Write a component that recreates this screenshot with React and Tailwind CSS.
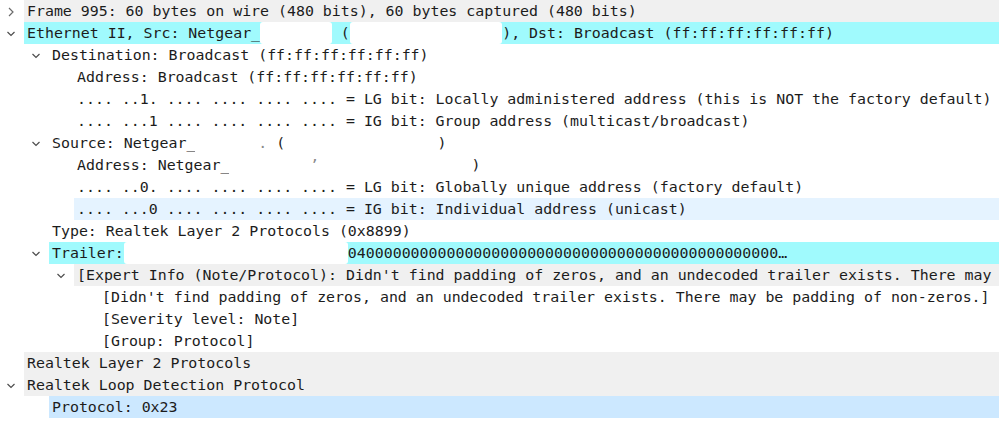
import React from "react";

const indentWidth = {
  0: "w-[24px]",
  1: "w-[49px]",
  2: "w-[74px]",
  3: "w-[99px]",
};

const rowBg = {
  gray: "bg-[#f0f0f0]",
  cyan: "bg-[#a0fafd]",
  hover: "bg-[#e5f3ff]",
  selected: "bg-[#cce8ff]",
  none: "",
};

// h = redacted part (kept so the monospace columns stay in place)
const rows = [
  { level: 0, arrow: "right", bg: "gray", parts: ["Frame 995: 60 bytes on wire (480 bits), 60 bytes captured (480 bits)"] },
  {
    level: 0,
    arrow: "down",
    bg: "cyan",
    parts: ["Ethernet II, Src: Netgear_", { h: "xx:xx:xx" }, " (", { h: "xx:xx:xx:xx:xx:xx" }, "), Dst: Broadcast (ff:ff:ff:ff:ff:ff)"],
  },
  { level: 1, arrow: "down", parts: ["Destination: Broadcast (ff:ff:ff:ff:ff:ff)"] },
  { level: 2, parts: ["Address: Broadcast (ff:ff:ff:ff:ff:ff)"] },
  { level: 2, parts: [".... ..1. .... .... .... .... = LG bit: Locally administered address (this is NOT the factory default)"] },
  { level: 2, parts: [".... ...1 .... .... .... .... = IG bit: Group address (multicast/broadcast)"] },
  { level: 1, arrow: "down", parts: ["Source: Netgear_", { h: "xx:xx:x" }, { dot: "." }, " (", { h: "xx:xx:xx:xx:xx:xx" }, ")"] },
  { level: 2, parts: ["Address: Netgear_", { h: "xx:xx:xx " }, { dot: "ʼ" }, { h: "xx:xx:xx:xx:xx:xx" }, ")"] },
  { level: 2, parts: [".... ..0. .... .... .... .... = LG bit: Globally unique address (factory default)"] },
  { level: 2, bg: "hover", parts: [".... ...0 .... .... .... .... = IG bit: Individual address (unicast)"] },
  { level: 1, parts: ["Type: Realtek Layer 2 Protocols (0x8899)"] },
  {
    level: 1,
    arrow: "down",
    bg: "cyan",
    parts: ["Trailer:", { h: " 000000000000000000000000" }, "04" + "0".repeat(46) + "…"],
  },
  {
    level: 2,
    arrow: "down",
    bg: "gray",
    parts: ["[Expert Info (Note/Protocol): Didn't find padding of zeros, and an undecoded trailer exists. There may"],
  },
  { level: 3, parts: ["[Didn't find padding of zeros, and an undecoded trailer exists. There may be padding of non-zeros.]"] },
  { level: 3, parts: ["[Severity level: Note]"] },
  { level: 3, parts: ["[Group: Protocol]"] },
  { level: 0, bg: "gray", parts: ["Realtek Layer 2 Protocols"] },
  { level: 0, arrow: "down", bg: "gray", parts: ["Realtek Loop Detection Protocol"] },
  { level: 1, bg: "selected", parts: ["Protocol: 0x23"] },
];

function Arrow({ dir }) {
  if (dir === "right") {
    return (
      <svg width="8" height="10" viewBox="0 0 8 10" className="mt-[1px]">
        <path d="M2 1 L6 5 L2 9" fill="none" stroke="#6b6b6b" strokeWidth="1.2" />
      </svg>
    );
  }
  return (
    <svg width="8" height="6" viewBox="0 0 8 6" className="mt-[2px]">
      <path d="M0.5 1 L4 4.5 L7.5 1" fill="none" stroke="#4d4d4d" strokeWidth="1.2" />
    </svg>
  );
}

function Row({ row }) {
  return (
    <div className="flex h-[22px] items-stretch">
      <div className={`${indentWidth[row.level]} flex shrink-0 items-center justify-end pr-[9px]`}>
        {row.arrow ? <Arrow dir={row.arrow} /> : null}
      </div>
      <div className={`${rowBg[row.bg ?? "none"]} flex min-w-0 flex-1 items-center overflow-hidden whitespace-pre pl-[3px]`}>
        {row.parts.map((part, i) => {
          if (typeof part === "string") {
            return <span key={i}>{part}</span>;
          }
          if (part.dot) {
            return (
              <span key={i} className="text-[#8a8a8a]">
                {part.dot}
              </span>
            );
          }
          return (
            <span key={i} className="rounded-[3px] bg-white text-transparent">
              {part.h}
            </span>
          );
        })}
      </div>
    </div>
  );
}

export default function App() {
  return (
    <main className="h-[436px] w-[999px] overflow-hidden bg-white font-['DejaVu_Sans_Mono',monospace] text-[14.9px] leading-[22px] text-[#1c1c1c]">
      {rows.map((row, i) => (
        <Row key={i} row={row} />
      ))}
    </main>
  );
}
